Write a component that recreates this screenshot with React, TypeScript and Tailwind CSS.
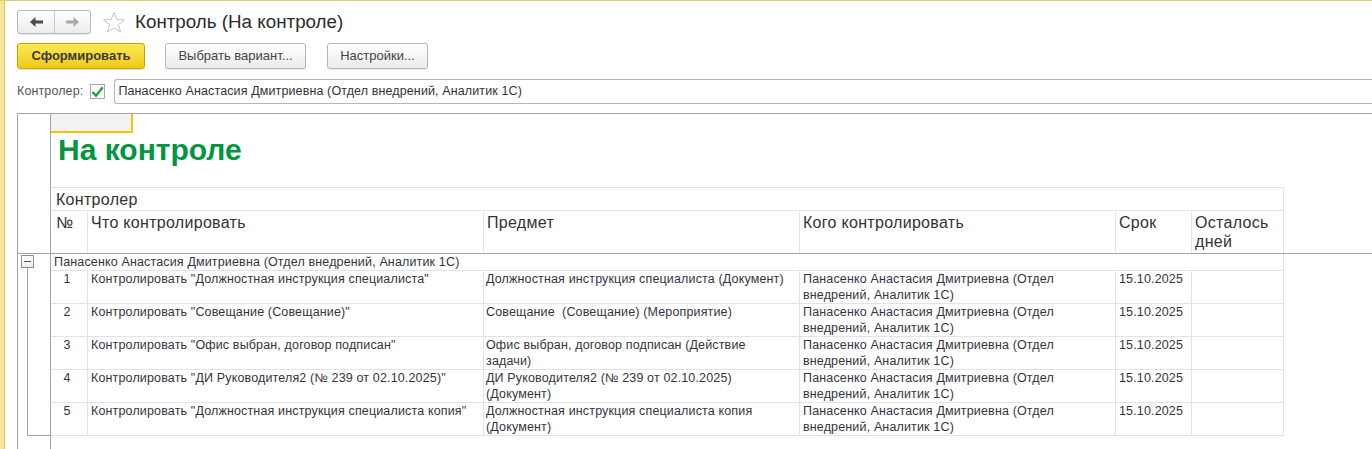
import React from 'react';

const GRID = 'grid grid-cols-[37px_396px_316px_316px_76px_92px]';

const who = 'Панасенко Анастасия Дмитриевна (Отдел\nвнедрений, Аналитик 1С)';

const rows = [
  { n: '1', what: 'Контролировать "Должностная инструкция специалиста"', subj: 'Должностная инструкция специалиста (Документ)' },
  { n: '2', what: 'Контролировать "Совещание (Совещание)"', subj: 'Совещание  (Совещание) (Мероприятие)' },
  { n: '3', what: 'Контролировать "Офис выбран, договор подписан"', subj: 'Офис выбран, договор подписан (Действие\nзадачи)' },
  { n: '4', what: 'Контролировать "ДИ Руководителя2 (№ 239 от 02.10.2025)"', subj: 'ДИ Руководителя2 (№ 239 от 02.10.2025)\n(Документ)' },
  { n: '5', what: 'Контролировать "Должностная инструкция специалиста копия"', subj: 'Должностная инструкция специалиста копия\n(Документ)' },
];

function Star() {
  return (
    <svg width="24" height="23" viewBox="0 0 24 23">
      <polygon
        points="12,1.5 14.8,8.6 22.4,8.9 16.4,13.6 18.5,21 12,16.8 5.5,21 7.6,13.6 1.6,8.9 9.2,8.6"
        fill="#fff"
        stroke="#c4c4c4"
        strokeWidth="1"
        strokeLinejoin="round"
      />
    </svg>
  );
}

function Arrow({ color, flip }: { color: string; flip?: boolean }) {
  return (
    <svg width="13" height="10" viewBox="0 0 13 10" className={flip ? 'rotate-180' : ''}>
      <path d="M0 5 L5.5 0 L5.5 3.6 L13 3.6 L13 6.4 L5.5 6.4 L5.5 10 Z" fill={color} />
    </svg>
  );
}

export default function App() {
  return (
    <div className="h-screen w-full overflow-hidden bg-white flex border-t border-[#e2cc78] font-['Liberation_Sans',Arial,sans-serif] text-[#333]">
      {/* left yellow strip */}
      <div className="w-[5px] shrink-0 bg-[#fbe79c] border-r border-[#dcc373]" />

      <div className="flex-1 min-w-0 flex flex-col pl-[12px] pt-[9px]">
        {/* header */}
        <div className="flex items-center h-[24px]">
          <div className="flex h-[24px] w-[74px] rounded-[3px] border border-[#b9b9b9] bg-gradient-to-b from-white to-[#ececec] shadow-[0_1px_1px_rgba(0,0,0,0.08)]">
            <div className="w-[37px] flex items-center justify-center border-r border-[#c9c9c9]">
              <Arrow color="#4a4a4a" />
            </div>
            <div className="flex-1 flex items-center justify-center">
              <Arrow color="#a9a9a9" flip />
            </div>
          </div>
          <div className="ml-[11px]">
            <Star />
          </div>
          <div className="ml-[9px] text-[18.8px] leading-[24px] text-[#2b2b2b]">Контроль (На контроле)</div>
        </div>

        {/* buttons */}
        <div className="flex mt-[9px] h-[26px] text-[13px]">
          <button className="w-[128px] rounded-[3px] border border-[#c9a700] bg-gradient-to-b from-[#fde852] to-[#f1cb07] font-bold text-[#3a3a3a] shadow-[0_1px_1px_rgba(0,0,0,0.12)]">
            Сформировать
          </button>
          <button className="ml-[20px] w-[141px] rounded-[3px] border border-[#b6b6b6] bg-gradient-to-b from-white to-[#ebebeb] text-[#444] shadow-[0_1px_1px_rgba(0,0,0,0.1)]">
            Выбрать вариант...
          </button>
          <button className="ml-[21px] w-[101px] rounded-[3px] border border-[#b6b6b6] bg-gradient-to-b from-white to-[#ebebeb] text-[#444] shadow-[0_1px_1px_rgba(0,0,0,0.1)]">
            Настройки...
          </button>
        </div>

        {/* controller */}
        <div className="flex items-center mt-[10px] h-[25px] text-[12.5px] tracking-[0.12px]">
          <span className="text-[#555]">Контролер:</span>
          <div className="ml-[7px] w-[15px] h-[15px] border border-[#a9a9a9] bg-white flex items-center justify-center">
            <svg width="13" height="12" viewBox="0 0 13 12">
              <path d="M1.5 6 L5 9.8 L11.8 1.2" fill="none" stroke="#1c9c3c" strokeWidth="2.2" />
            </svg>
          </div>
          <div className="ml-[9px] flex-1 h-[25px] flex items-center pl-[3px] border border-r-0 border-[#b5b5b5] rounded-l-[3px] text-[#333]">
            Панасенко Анастасия Дмитриевна (Отдел внедрений, Аналитик 1С)
          </div>
        </div>

        {/* spreadsheet */}
        <div className="mt-[9px] flex-1 flex flex-col border-t border-l border-[#a3a3a3]">
          {/* header section */}
          <div className="flex border-b border-[#a3a3a3]">
            <div className="w-[33px] shrink-0 border-r border-[#a3a3a3]" />
            <div className="flex-1 min-w-0">
              <div className="h-[19px] w-[82px] bg-[#f2f2f2] border-r-2 border-b-2 border-[#f5c400]" />
              <div className="h-[54px] pl-[7px] pt-[2px] text-[30px] leading-[30px] font-bold text-[#00963f]">На контроле</div>
              <div className="w-[1233px] border-t border-[#e3e3e3] text-[16px] leading-[19px] tracking-[0.3px] text-[#333]">
                <div className="h-[23px] border-b border-r border-[#e3e3e3] pl-[5px] pt-[2px]">Контролер</div>
                <div className={GRID + ' h-[42px]'}>
                  <div className="border-r border-[#e3e3e3] pl-[5px] pt-[2px]">№</div>
                  <div className="border-r border-[#e3e3e3] pl-[3px] pt-[2px]">Что контролировать</div>
                  <div className="border-r border-[#e3e3e3] pl-[3px] pt-[2px]">Предмет</div>
                  <div className="border-r border-[#e3e3e3] pl-[3px] pt-[2px]">Кого контролировать</div>
                  <div className="border-r border-[#e3e3e3] pl-[3px] pt-[2px]">Срок</div>
                  <div className="border-r border-[#e3e3e3] pl-[3px] pt-[2px]">Осталось<br />дней</div>
                </div>
              </div>
            </div>
          </div>

          {/* group section */}
          <div className="flex">
            <div className="w-[33px] shrink-0 border-r border-[#a3a3a3] flex flex-col">
              <div className="mt-[1px] ml-[3px] w-[13px] h-[13px] border border-[#8e8e8e] bg-gradient-to-b from-white to-[#eeeeee] flex items-center justify-center">
                <div className="w-[7px] h-px bg-[#555]" />
              </div>
              <div className="flex-1 ml-[9px] border-l border-b border-[#a3a3a3]" />
            </div>
            <div className="flex-1 min-w-0 text-[12.5px] leading-[16px] tracking-[0.15px] text-[#34343f]">
              <div className="w-[1233px] h-[17px] border-b border-r border-[#e3e3e3] pl-[3px] whitespace-pre">
                Панасенко Анастасия Дмитриевна (Отдел внедрений, Аналитик 1С)
              </div>
              {rows.map((r) => (
                <div key={r.n} className={GRID + ' w-[1233px] h-[33px] border-b border-[#e3e3e3]'}>
                  <div className="border-r border-[#e3e3e3] text-center pr-[4px]">{r.n}</div>
                  <div className="border-r border-[#e3e3e3] pl-[3px] whitespace-pre">{r.what}</div>
                  <div className="border-r border-[#e3e3e3] pl-[2px] whitespace-pre">{r.subj}</div>
                  <div className="border-r border-[#e3e3e3] pl-[3px] whitespace-pre">{who}</div>
                  <div className="border-r border-[#e3e3e3] pl-[3px]">15.10.2025</div>
                  <div className="border-r border-[#e3e3e3]" />
                </div>
              ))}
            </div>
          </div>

          {/* filler */}
          <div className="flex flex-1">
            <div className="w-[33px] shrink-0 border-r border-[#a3a3a3]" />
            <div className="flex-1" />
          </div>
        </div>
      </div>
    </div>
  );
}
